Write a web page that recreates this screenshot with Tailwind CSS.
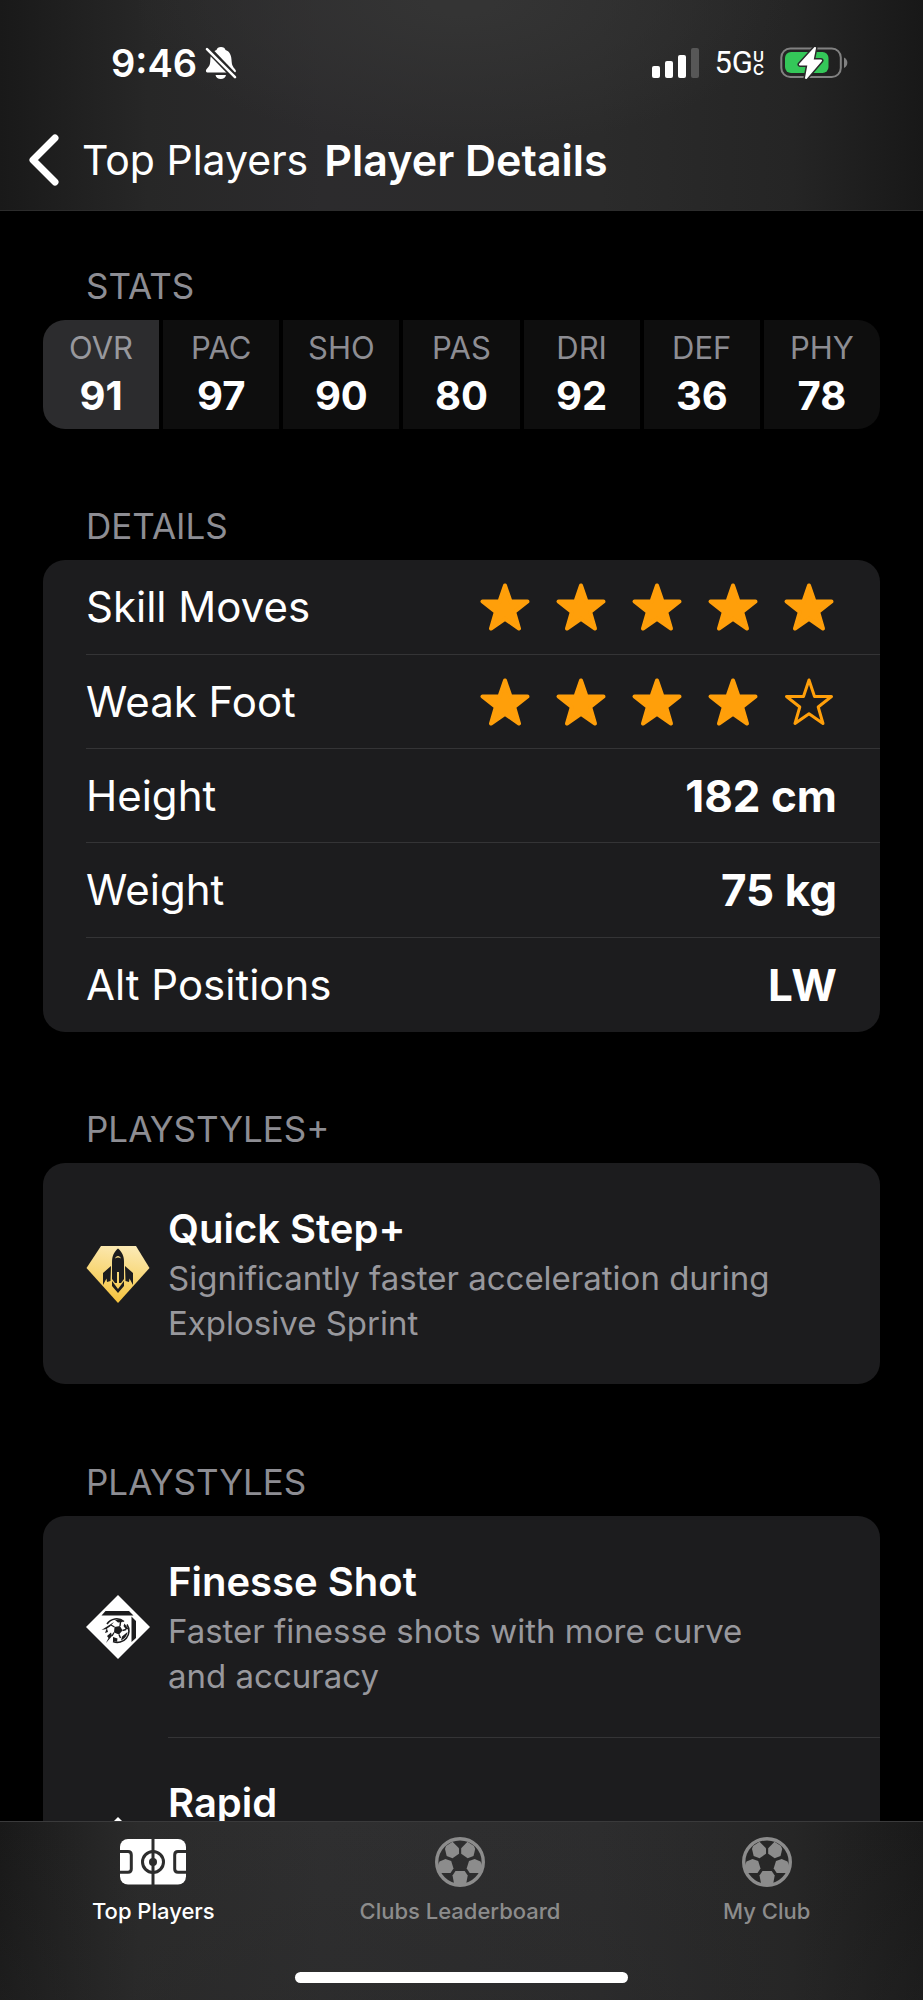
<!DOCTYPE html>
<html lang="en">
<head>
<meta charset="utf-8">
<meta name="viewport" content="width=device-width, initial-scale=1">
<title>Player Details</title>
<script src="https://cdn.jsdelivr.net/npm/@tailwindcss/browser@4"></script>
</head>
<body class="flex h-screen flex-col overflow-hidden bg-black font-['Inter',sans-serif] text-white">

<svg class="hidden" aria-hidden="true">
  <symbol id="star" viewBox="0 0 52 50">
    <path d="M26 3.500 L31.500 19.500 L48.500 19.500 L35.200 30 L40 46.500 L26 36.800 L12 46.500 L16.800 30 L3.500 19.500 L20.500 19.500 Z" fill="currentColor" stroke="currentColor" stroke-width="4" stroke-linejoin="round"/>
  </symbol>
  <symbol id="star-outline" viewBox="0 0 52 50">
    <path d="M26 3 L31.500 19.500 L48.500 19.500 L35.200 30 L40 46.500 L26 36.800 L12 46.500 L16.800 30 L3.500 19.500 L20.500 19.500 Z" fill="none" stroke="currentColor" stroke-width="3" stroke-linejoin="round"/>
  </symbol>
  <symbol id="ball" viewBox="0 0 50 50">
    <circle cx="25" cy="25" r="23.300" fill="none" stroke="currentColor" stroke-width="3.400"/>
    <g fill="currentColor">
      <path d="M11 9 L17.500 4.800 L24 11.200 L24 16.800 L17.500 21.300 L11.700 19 L10 12 Z"/>
      <path d="M39 9 L32.500 4.800 L26.200 11.200 L26.200 16.800 L32.700 21.300 L38.500 19 L40.200 12 Z"/>
      <path d="M3.500 27 L4.500 24.500 L10.500 22 L16.200 24 L18.500 31.500 L15.500 36 L4.800 36 L2.500 30 Z"/>
      <path d="M46.500 27 L45.500 24.500 L39.700 22 L34 24 L31.700 31.500 L34.700 36 L45.400 36 L47.500 30 Z"/>
      <path d="M20.500 34 L29.700 34 L32.700 38.500 L31.200 46.500 L25 48.500 L19 46.500 L17.500 38.500 Z"/>
    </g>
  </symbol>
</svg>

<header class="flex shrink-0 flex-col border-b border-[#2c2c2c] bg-[radial-gradient(ellipse_at_50%_0%,#343434_0%,#343434_5%,transparent_50%),linear-gradient(to_right,#191919,#272727_16%,#2c2b2d_35%,#2b2b2b_65%,#252525_86%,#181818)]">
  <div class="flex h-[126px] items-center justify-between pr-[75px] pl-[111px]">
    <div class="flex items-center gap-2">
      <span class="text-[38px] leading-[44px] font-semibold">9:46</span>
      <svg class="h-[34px] w-8" viewBox="0 0 32 34" aria-label="Silent mode">
        <path d="M16 1 C13.500 1 12 2.300 11.500 4 C7 5.500 5.500 9.500 5.300 14 C5.200 18.500 4.500 20 2.500 22 C1.200 23.400 0.800 24.300 1 25.300 C1.200 26.300 2 26.600 3 26.600 L29 26.600 C30.500 26.600 31.200 25.500 30.800 24.500 C30 22.500 27 21 26.700 16 C26.500 9.500 25 5.500 20.500 4 C20 2.300 18.500 1 16 1 Z M10.500 29 L21 29 C20.500 31.500 18.500 33 15.800 33 C13 33 11 31.500 10.500 29 Z" fill="#fff"/>
        <path d="M2 2 L30 31" stroke="#282828" stroke-width="6.500"/>
        <path d="M2 3.200 L30 31.200" stroke="#fff" stroke-width="2.600" stroke-linecap="round"/>
      </svg>
    </div>
    <div class="flex items-center">
      <svg class="h-[30px] w-12" viewBox="0 0 48 30" aria-label="Signal strength">
        <rect x="0" y="18" width="8" height="12" rx="2" fill="#fff"/>
        <rect x="13" y="13" width="8" height="17" rx="2" fill="#fff"/>
        <rect x="26" y="7" width="8" height="23" rx="2" fill="#fff"/>
        <rect x="39" y="0" width="8" height="30" rx="2" fill="#575757"/>
      </svg>
      <span class="ml-[14px] font-['Roboto',sans-serif] text-[31px] leading-8">5G</span>
      <span class="flex flex-col text-[15px] leading-[13px] font-semibold"><span>U</span><span>C</span></span>
      <svg class="ml-4 h-8 w-[68px]" viewBox="0 0 68 32" aria-label="Battery charging">
        <rect x="1.300" y="1.500" width="59.500" height="28.500" rx="9" fill="none" stroke="#818181" stroke-width="2"/>
        <path d="M64 10.500 C68.500 12.500 68.500 19 64 21 Z" fill="#818181"/>
        <rect x="5" y="5" width="43.500" height="21" rx="6" fill="#34c759"/>
        <path d="M35 1 L20 17.500 L28.500 17.500 L26 31 L41 13.500 L32.500 13.500 Z" fill="#fff" stroke="#2a2a2a" stroke-width="5" stroke-linejoin="round"/>
        <path d="M35 1 L20 17.500 L28.500 17.500 L26 31 L41 13.500 L32.500 13.500 Z" fill="#fff" stroke="#fff" stroke-width="2" stroke-linejoin="round"/>
      </svg>
    </div>
  </div>
  <nav class="flex h-[84px] items-start gap-4 pt-[6px] pl-7">
    <button type="button" class="flex items-center gap-[22px] text-[41px] leading-[56px]">
      <svg class="h-[54px] w-8" viewBox="0 0 32 54" fill="none" stroke="#fff" stroke-width="7" stroke-linecap="round" stroke-linejoin="round" aria-hidden="true"><path d="M27 5 L5 27 L27 49"/></svg>
      <span>Top Players</span>
    </button>
    <h1 class="text-[43px] leading-[56px] font-semibold">Player Details</h1>
  </nav>
</header>

<main class="min-h-0 flex-1 overflow-hidden px-[43px] pt-[50px]">
  <section>
    <h2 class="flex h-[59px] items-start pt-[5px] pl-[43px] text-[35px] leading-[40px] text-[#8d8d93]">STATS</h2>
    <dl class="grid grid-cols-7 gap-1 overflow-hidden rounded-[22px] text-center">
      <div class="bg-[#2c2c2e] pt-2 pb-[6px]"><dt class="text-[31px] leading-10 text-[#98989d]">OVR</dt><dd class="text-[40px] leading-[55px] font-bold">91</dd></div>
      <div class="bg-[#0e0e0e] pt-2 pb-[6px]"><dt class="text-[31px] leading-10 text-[#8d8d93]">PAC</dt><dd class="text-[40px] leading-[55px] font-bold">97</dd></div>
      <div class="bg-[#0e0e0e] pt-2 pb-[6px]"><dt class="text-[31px] leading-10 text-[#8d8d93]">SHO</dt><dd class="text-[40px] leading-[55px] font-bold">90</dd></div>
      <div class="bg-[#0e0e0e] pt-2 pb-[6px]"><dt class="text-[31px] leading-10 text-[#8d8d93]">PAS</dt><dd class="text-[40px] leading-[55px] font-bold">80</dd></div>
      <div class="bg-[#0e0e0e] pt-2 pb-[6px]"><dt class="text-[31px] leading-10 text-[#8d8d93]">DRI</dt><dd class="text-[40px] leading-[55px] font-bold">92</dd></div>
      <div class="bg-[#0e0e0e] pt-2 pb-[6px]"><dt class="text-[31px] leading-10 text-[#8d8d93]">DEF</dt><dd class="text-[40px] leading-[55px] font-bold">36</dd></div>
      <div class="bg-[#0e0e0e] pt-2 pb-[6px]"><dt class="text-[31px] leading-10 text-[#8d8d93]">PHY</dt><dd class="text-[40px] leading-[55px] font-bold">78</dd></div>
    </dl>
  </section>

  <section class="mt-[72px]">
    <h2 class="flex h-[59px] items-start pt-[5px] pl-[43px] text-[35px] leading-[40px] text-[#8d8d93]">DETAILS</h2>
    <dl class="rounded-[22px] bg-[#1c1c1e] pl-[43px] text-[42px] leading-[56px]">
      <div class="flex h-[95px] items-center justify-between border-b border-[#343436] pr-[45px]">
        <dt>Skill Moves</dt>
        <dd class="flex gap-6 text-[#ff9f0a]" aria-label="5 out of 5">
          <svg class="h-[50px] w-[52px]"><use href="#star"/></svg><svg class="h-[50px] w-[52px]"><use href="#star"/></svg><svg class="h-[50px] w-[52px]"><use href="#star"/></svg><svg class="h-[50px] w-[52px]"><use href="#star"/></svg><svg class="h-[50px] w-[52px]"><use href="#star"/></svg>
        </dd>
      </div>
      <div class="flex h-[94px] items-center justify-between border-b border-[#343436] pr-[45px]">
        <dt>Weak Foot</dt>
        <dd class="flex gap-6 text-[#ff9f0a]" aria-label="4 out of 5">
          <svg class="h-[50px] w-[52px]"><use href="#star"/></svg><svg class="h-[50px] w-[52px]"><use href="#star"/></svg><svg class="h-[50px] w-[52px]"><use href="#star"/></svg><svg class="h-[50px] w-[52px]"><use href="#star"/></svg><svg class="h-[50px] w-[52px]"><use href="#star-outline"/></svg>
        </dd>
      </div>
      <div class="flex h-[94px] items-center justify-between border-b border-[#343436] pr-[43px]"><dt>Height</dt><dd class="text-[44px] font-bold">182 cm</dd></div>
      <div class="flex h-[95px] items-center justify-between border-b border-[#343436] pr-[43px]"><dt>Weight</dt><dd class="text-[44px] font-bold">75 kg</dd></div>
      <div class="flex h-[94px] items-center justify-between pr-[43px]"><dt>Alt Positions</dt><dd class="text-[44px] font-bold">LW</dd></div>
    </dl>
  </section>

  <section class="mt-[72px]">
    <h2 class="flex h-[59px] items-start pt-[5px] pl-[43px] text-[35px] leading-[40px] text-[#8d8d93]">PLAYSTYLES+</h2>
    <ul class="rounded-[22px] bg-[#1c1c1e] pl-[43px]">
      <li class="flex h-[221px] items-center gap-[18px]">
        <svg class="h-16 w-16 shrink-0" viewBox="0 0 64 64" aria-hidden="true">
          <defs><linearGradient id="gold" x1="0.600" y1="0" x2="0.400" y2="1"><stop offset="0" stop-color="#fbe9b4"/><stop offset="0.500" stop-color="#f8d777"/><stop offset="1" stop-color="#f6c23a"/></linearGradient></defs>
          <path d="M15 4 H50 L63.500 26 L32 61 L0.500 26 Z" fill="url(#gold)"/>
          <g fill="#1c1c1e">
            <path d="M32 6.500 C28 10 26 14 26 20 V37 L29 41 H31 V30 H33 V41 H35 L38 37 V20 C38 14 36 10 32 6.500 Z"/>
            <path d="M25 24 L17 31 V43 L20.500 36.500 L21 40 L24.500 39 Z M39 24 L47 31 V43 L43.500 36.500 L43 40 L39.500 39 Z"/>
            <path d="M26 39 L32 47 L38 39 V44 L32 51 L26 44 Z"/>
          </g>
          <path d="M29 16.500 C30 13 34 13 35 16.500 C33 15.300 31 15.300 29 16.500 Z" fill="#f9dc88"/>
        </svg>
        <div>
          <h3 class="text-[40px] leading-[54px] font-semibold">Quick Step+</h3>
          <p class="max-w-[620px] text-[33px] leading-[45px] text-[#98989d]">Significantly faster acceleration during Explosive Sprint</p>
        </div>
      </li>
    </ul>
  </section>

  <section class="mt-[73px]">
    <h2 class="flex h-[59px] items-start pt-[5px] pl-[43px] text-[35px] leading-[40px] text-[#8d8d93]">PLAYSTYLES</h2>
    <ul class="rounded-[22px] bg-[#1c1c1e] pl-[43px]">
      <li class="flex h-[222px] items-center gap-[18px]">
        <svg class="h-16 w-16 shrink-0" viewBox="0 0 64 64" aria-hidden="true">
          <path d="M32 0 L64 32 L32 64 L0 32 Z" fill="#fff"/>
          <path d="M19.500 16 H43 L47.500 20.500 H15.500 Z M45.500 21.500 L50 26 V43 L45.500 47 Z" fill="#1c1c1e"/>
          <path d="M21 29 A11.500 11.500 0 0 1 38 26.500 M41 29.500 A11.500 11.500 0 0 1 27 46.500" fill="none" stroke="#1c1c1e" stroke-width="1.600"/>
          <g fill="#1c1c1e">
            <path d="M28.500 32 L34 31 L36.500 35.500 L33 39.500 L28 37.500 Z"/>
            <path d="M29 25 L35 24.300 L37 27 L32 27.500 Z M38.500 28.500 L42.500 34 L40 34.500 L37.500 31 Z M41.500 37 C41 41 38.500 44 35 45.500 L36 41.500 Z M27 42 L31.500 43.500 L31 46.700 L27 46 Z"/>
            <path d="M15.500 35 L28 27 L24 31.500 L21 33.500 L22 37 L19 38 L20.500 34 Z M21 41 L25 37.500 L26 41 L20 48 L22.500 43 Z"/>
          </g>
          <path d="M34 31 L34.500 27 M36.500 35.500 L40 34.500 M33 39.500 L34.500 43 M28 37.500 L26 41 M28.500 32 L25 30" stroke="#1c1c1e" stroke-width="1.400"/>
        </svg>
        <div class="flex h-full flex-1 flex-col justify-center border-b border-[#343436]">
          <h3 class="text-[40px] leading-[54px] font-semibold">Finesse Shot</h3>
          <p class="max-w-[600px] text-[33px] leading-[45px] text-[#98989d]">Faster finesse shots with more curve and accuracy</p>
        </div>
      </li>
      <li class="flex h-[221px] items-center gap-[18px]">
        <svg class="h-16 w-16 shrink-0" viewBox="0 0 64 64" aria-hidden="true"><path d="M32 0 L64 32 L32 64 L0 32 Z" fill="#fff"/></svg>
        <h3 class="self-start pt-[38px] text-[40px] leading-[54px] font-semibold">Rapid</h3>
      </li>
    </ul>
  </section>
</main>

<footer class="shrink-0 border-t border-[#3a3a3b] bg-[linear-gradient(to_bottom,transparent,#2626264d),linear-gradient(to_right,#191919,#2b2b2b_15%,#2f2f30_35%,#2d2d2e_65%,#262626_86%,#191919)]">
  <nav class="grid h-[150px] grid-cols-3 pr-[3px]">
    <a href="#top-players" class="flex flex-col items-center pt-[14px]">
      <svg class="h-[52px] w-[66px]" viewBox="0 0 66 52" aria-hidden="true">
        <rect x="0" y="3" width="66" height="45.500" rx="8" fill="#fff"/>
        <g fill="none" stroke="#2d2d2d" stroke-width="3">
          <path d="M33 2 V50"/>
          <circle cx="33" cy="26" r="10.500"/>
          <path d="M-1 15.500 H8 Q11.300 15.500 11.300 19 V33 Q11.300 36.300 8 36.300 H-1 M67 15.500 H58 Q54.700 15.500 54.700 19 V33 Q54.700 36.300 58 36.300 H67"/>
        </g>
        <circle cx="33" cy="26" r="4" fill="#2d2d2d"/>
      </svg>
      <span class="mt-[10px] text-[22px] leading-[26px] font-medium">Top Players</span>
    </a>
    <a href="#clubs-leaderboard" class="flex flex-col items-center pt-[14px] text-[#8c8c8c]">
      <svg class="h-[52px] w-[50px]" viewBox="0 0 50 50" aria-hidden="true"><use href="#ball"/></svg>
      <span class="mt-[10px] text-[22px] leading-[26px] font-medium">Clubs Leaderboard</span>
    </a>
    <a href="#my-club" class="flex flex-col items-center pt-[14px] text-[#8c8c8c]">
      <svg class="h-[52px] w-[50px]" viewBox="0 0 50 50" aria-hidden="true"><use href="#ball"/></svg>
      <span class="mt-[10px] text-[22px] leading-[26px] font-medium">My Club</span>
    </a>
  </nav>
  <div class="flex h-7 items-start justify-center"><div class="h-[11px] w-[36%] rounded-full bg-white"></div></div>
</footer>
</body>
</html>
